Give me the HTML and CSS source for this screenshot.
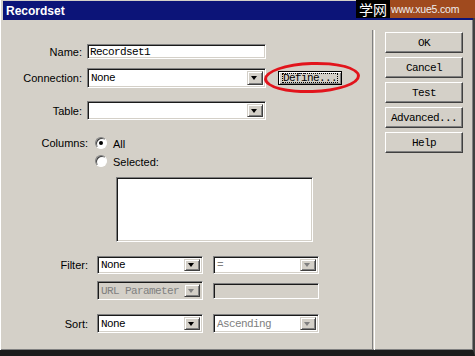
FILE: index.html
```html
<!DOCTYPE html>
<html lang="en">
<head>
    <meta charset="UTF-8">
    <title>Recordset</title>
    <link rel="stylesheet" href="styles.css">
</head>
<body>
    <div class="window">
        <div class="titlebar"><span class="title">Recordset</span></div>
        <div class="watermark"><span class="wm-cn">学网</span><span class="wm-url">www.xue5.com</span></div>

        <div class="content">
            <div class="form">
                <div class="row row-name">
                    <span class="lbl">Name:</span>
                    <div class="field input wide">Recordset1</div>
                </div>
                <div class="row row-conn">
                    <span class="lbl">Connection:</span>
                    <div class="field select wide"><span class="val">None</span><span class="arrow"></span></div>
                    <div class="btn btn-define"><span class="focus">Define...</span></div>
                    <div class="circle"></div>
                </div>
                <div class="row row-table">
                    <span class="lbl">Table:</span>
                    <div class="field select wide"><span class="val"></span><span class="arrow"></span></div>
                </div>

                <div class="columns">
                    <div class="radio-row">
                        <span class="lbl lbl-low">Columns:</span>
                        <span class="radio checked"></span>
                        <span class="radio-text">All</span>
                    </div>
                    <div class="radio-row">
                        <span class="lbl lbl-low"></span>
                        <span class="radio"></span>
                        <span class="radio-text">Selected:</span>
                    </div>
                </div>
                <div class="field listbox"></div>

                <div class="row row-filter">
                    <span class="lbl lbl-low">Filter:</span>
                    <div class="field select narrow"><span class="val">None</span><span class="arrow"></span></div>
                    <div class="field select narrow dim"><span class="val">=</span><span class="arrow off"></span></div>
                </div>
                <div class="row row-url">
                    <span class="lbl lbl-low"></span>
                    <div class="field select narrow off-bg dim"><span class="val">URL Parameter</span><span class="arrow off"></span></div>
                    <div class="field input narrow off-bg short"></div>
                </div>
                <div class="row row-sort">
                    <span class="lbl lbl-low">Sort:</span>
                    <div class="field select narrow"><span class="val">None</span><span class="arrow"></span></div>
                    <div class="field select narrow dim"><span class="val">Ascending</span><span class="arrow off"></span></div>
                </div>
            </div>

            <div class="divider"></div>

            <div class="actions">
                <div class="btn">OK</div>
                <div class="btn">Cancel</div>
                <div class="btn">Test</div>
                <div class="btn">Advanced...</div>
                <div class="btn">Help</div>
            </div>
        </div>
    </div>
</body>
</html>
```

FILE: styles.css
```css
body {
    margin: 0;
    width: 475px;
    height: 356px;
    overflow: hidden;
    background: #d4d0c8;
    font-family: "Liberation Sans", Arial, sans-serif;
    font-size: 11px;
    color: #000;
}

.window {
    position: relative;
    box-sizing: border-box;
    display: flex;
    flex-direction: column;
    width: 475px;
    height: 356px;
    border-bottom: 6px solid #1c1c1c;
    border-right: 2px solid #404040;
    box-shadow: inset 1px 0 #fff, inset 0 -1px #808080, inset -1px 0 #808080;
    padding-left: 1px;
}

.titlebar {
    display: flex;
    align-items: center;
    height: 19px;
    margin: 1px 0 1px 2px;
    background: #0c1478;
}

.title {
    padding-left: 3px;
    color: #fff;
    font-weight: bold;
    font-size: 12px;
}

/* watermark stamped over the title bar */
.watermark {
    position: absolute;
    top: 0;
    right: -2px;
    display: flex;
    height: 18px;
    line-height: 18px;
}

.wm-cn {
    width: 34px;
    background: #000;
    color: #fff;
    font-family: "Noto Sans CJK SC", sans-serif;
    font-size: 14px;
    text-align: center;
}

.wm-url {
    box-sizing: border-box;
    width: 85px;
    padding-left: 1px;
    background: #a04a1e;
    color: #eee;
    font-size: 10.5px;
    letter-spacing: -0.2px;
    white-space: nowrap;
}

.content {
    display: flex;
    flex: 1;
}

.form {
    width: 371px;
    padding-top: 23px;
    display: flex;
    flex-direction: column;
}

.row {
    position: relative;
    display: flex;
    align-items: center;
}

.lbl {
    width: 81px;
    margin-right: 5px;
    text-align: right;
}

.lbl-low {
    width: 87px;
    margin-right: 9px;
}

.row-name { height: 15px; }
.row-conn { height: 20px; margin-top: 9px; }
.row-table { height: 19px; margin-top: 13px; }
.row-filter { height: 18px; margin-top: 14px; }
.row-url { height: 19px; margin-top: 7px; }
.row-sort { height: 19px; margin-top: 14px; }

.field {
    box-sizing: border-box;
    height: 100%;
    display: flex;
    align-items: center;
    background: #fff;
    border: 1px solid;
    border-color: #808080 #fff #fff #808080;
    box-shadow: inset 1px 1px #1a1a1a, inset -1px -1px #d4d0c8;
    font-family: "Liberation Mono", "Courier New", monospace;
    font-size: 11px;
    letter-spacing: -0.6px;
    white-space: nowrap;
    overflow: hidden;
}

.input {
    padding-left: 2px;
}

.wide {
    width: 179px;
}

.narrow {
    width: 106px;
}

.narrow + .narrow {
    margin-left: 10px;
}

.short {
    height: 16px;
}

.val {
    flex: 1;
    padding-left: 3px;
}

.arrow {
    position: relative;
    box-sizing: border-box;
    width: 16px;
    height: calc(100% - 4px);
    margin-right: 2px;
    background: #d4d0c8;
    border: 1px solid;
    border-color: #d4d0c8 #404040 #404040 #d4d0c8;
    box-shadow: inset 1px 1px #fff, inset -1px -1px #808080;
}

.arrow::after {
    content: "";
    position: absolute;
    left: 3px;
    top: 50%;
    margin-top: -2px;
    border-style: solid;
    border-width: 4px 3.5px 0;
    border-color: #000 transparent transparent;
}

.arrow.off::after {
    border-top-color: #808080;
}

.dim {
    color: #808080;
}

.off-bg {
    background: #d4d0c8;
}

.btn {
    box-sizing: border-box;
    display: flex;
    align-items: center;
    justify-content: center;
    background: #d4d0c8;
    border: 1px solid;
    border-color: #fff #404040 #404040 #fff;
    box-shadow: inset -1px -1px #808080;
    font-family: "Liberation Mono", "Courier New", monospace;
    font-size: 11px;
    letter-spacing: -0.6px;
}

.btn-define {
    width: 64px;
    height: 14px;
    margin-left: 12px;
    border-color: #000;
    box-shadow: inset 1px 1px #fff, inset -1px -1px #808080;
}

.focus {
    padding: 0 1px;
    outline: 1px dotted #000;
    outline-offset: -1px;
    line-height: 10px;
}

.circle {
    position: absolute;
    left: 263px;
    top: -6px;
    width: 96px;
    height: 31px;
    box-sizing: border-box;
    border: 3px solid #e2141c;
    border-radius: 50%;
    transform: rotate(-2deg);
}

.columns {
    margin-top: 14px;
}

.radio-row {
    display: flex;
    align-items: center;
    height: 18px;
}

.radio-row .lbl-low {
    margin-right: 7px;
}

.radio {
    position: relative;
    box-sizing: border-box;
    width: 12px;
    height: 12px;
    border-radius: 50%;
    background: #fff;
    border: 1px solid;
    border-color: #808080 #fff #fff #808080;
    box-shadow: inset 1px 1px #404040;
}

.radio.checked::after {
    content: "";
    position: absolute;
    left: 3px;
    top: 3px;
    width: 4px;
    height: 4px;
    border-radius: 50%;
    background: #000;
}

.radio-text {
    margin-left: 6px;
    padding-top: 2px;
}

.listbox {
    width: 197px;
    height: 65px;
    margin: 7px 0 0 115px;
}

.divider {
    width: 1px;
    margin-top: 9px;
    border-left: 1px solid #808080;
    border-right: 1px solid #fff;
}

.actions {
    display: flex;
    flex-direction: column;
    gap: 4px;
    padding: 11px 0 0 10px;
}

.actions .btn {
    width: 78px;
    height: 21px;
}
```
